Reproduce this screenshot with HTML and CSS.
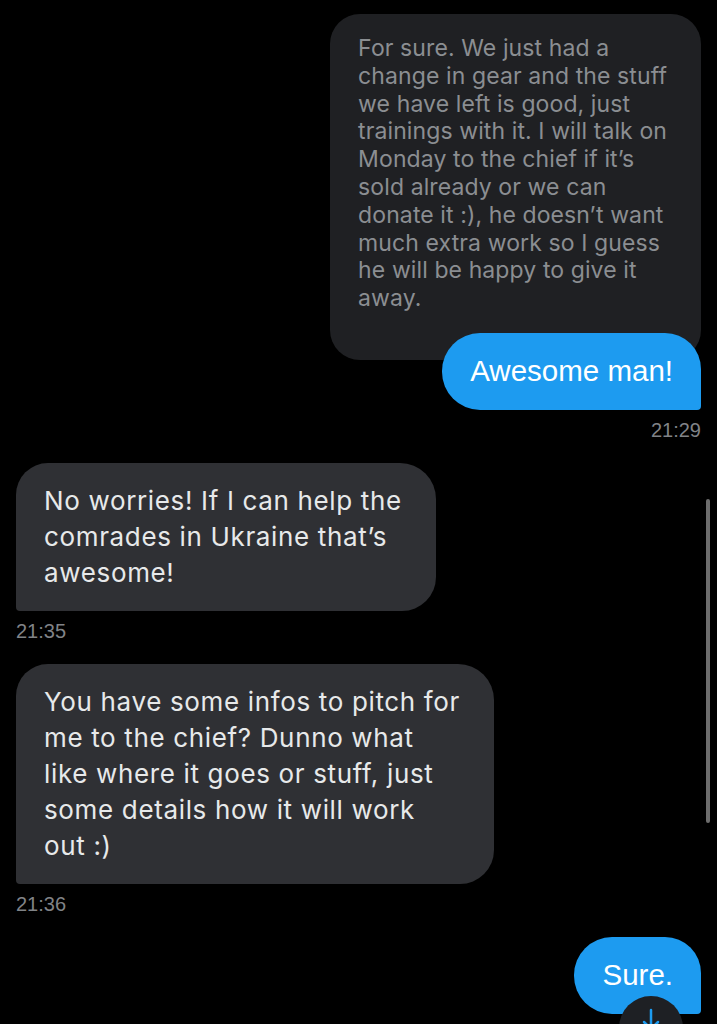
FILE: index.html
```html
<!DOCTYPE html>
<html lang="en">
<head>
    <meta charset="UTF-8">
    <meta name="viewport" content="width=device-width, initial-scale=1.0">
    <title>Messages</title>
    <link rel="stylesheet" href="styles.css">
</head>
<body>
    <div class="chat">
        <!-- Resposta com citação -->
        <div class="group sent">
            <div class="quote">
                For sure. We just had a<br>
                change in gear and the stuff<br>
                we have left is good, just<br>
                trainings with it. I will talk on<br>
                Monday to the chief if it’s<br>
                sold already or we can<br>
                donate it :), he doesn’t want<br>
                much extra work so I guess<br>
                he will be happy to give it<br>
                away.
            </div>
            <div class="bubble out reply">Awesome man!</div>
            <div class="time">21:29</div>
        </div>

        <div class="group received">
            <div class="bubble in">
                No worries! If I can help the<br>
                comrades in Ukraine that’s<br>
                awesome!
            </div>
            <div class="time">21:35</div>
        </div>

        <div class="group received">
            <div class="bubble in">
                You have some infos to pitch for<br>
                me to the chief? Dunno what<br>
                like where it goes or stuff, just<br>
                some details how it will work<br>
                out :)
            </div>
            <div class="time">21:36</div>
        </div>

        <div class="group sent">
            <div class="bubble out">Sure.</div>
        </div>
    </div>

    <div class="scrollbar"></div>

    <button class="scroll-down" aria-label="Scroll to bottom">
        <svg viewBox="0 0 64 64" width="64" height="64">
            <line x1="32" y1="14" x2="32" y2="42" stroke="#1d9bf0" stroke-width="2.5" stroke-linecap="round"/>
            <polyline points="25,26 32,33 39,26" fill="none" stroke="#1d9bf0" stroke-width="2.5" stroke-linecap="round" stroke-linejoin="round"/>
        </svg>
    </button>
</body>
</html>
```

FILE: styles.css
```css
/* Estilos gerais */
html {
    overflow: hidden;
}

body {
    margin: 0;
    background-color: #000000;
    font-family: 'Inter', 'Liberation Sans', sans-serif;
    color: #e7e9ea;
}

.chat {
    display: flex;
    flex-direction: column;
    padding: 14px 16px 0 16px;
}

.group {
    display: flex;
    flex-direction: column;
    margin-bottom: 22px;
}

.group.sent {
    align-items: flex-end;
}

.group.received {
    align-items: flex-start;
}

/* Mensagem citada */
.quote {
    background-color: #1f2023;
    color: #8b8e92;
    font-size: 23px;
    line-height: 27.8px;
    letter-spacing: 0.1px;
    padding: 21px 34px 47px 28px;
    border-radius: 30px;
}

/* Balões */
.bubble {
    position: relative;
}

.bubble.out {
    background-color: #1d9bf0;
    color: #ffffff;
    font-family: 'Liberation Sans', sans-serif;
    font-size: 29.5px;
    line-height: 36px;
    padding: 20px 28px 21px 28px;
    border-radius: 38px 36px 4px 38px;
}

.bubble.reply {
    margin-top: -27px;
}

.bubble.in {
    background-color: #2f3034;
    color: #e7e9ea;
    font-size: 26px;
    line-height: 36px;
    letter-spacing: 0.65px;
    padding: 20px 34px 20px 28px;
    border-radius: 32px 36px 34px 4px;
}

.time {
    margin-top: 9px;
    font-family: 'Liberation Sans', sans-serif;
    font-size: 20px;
    line-height: 22px;
    color: #808387;
}

/* Barra de rolagem */
.scrollbar {
    position: fixed;
    top: 499px;
    right: 7px;
    width: 4px;
    height: 324px;
    border-radius: 2px;
    background-color: #6d6d6d;
}

/* Botão para descer */
.scroll-down {
    position: fixed;
    right: 34px;
    bottom: -36px;
    width: 64px;
    height: 64px;
    padding: 0;
    border: none;
    border-radius: 50%;
    background-color: #1e2024;
}

.scroll-down svg {
    display: block;
}
```
